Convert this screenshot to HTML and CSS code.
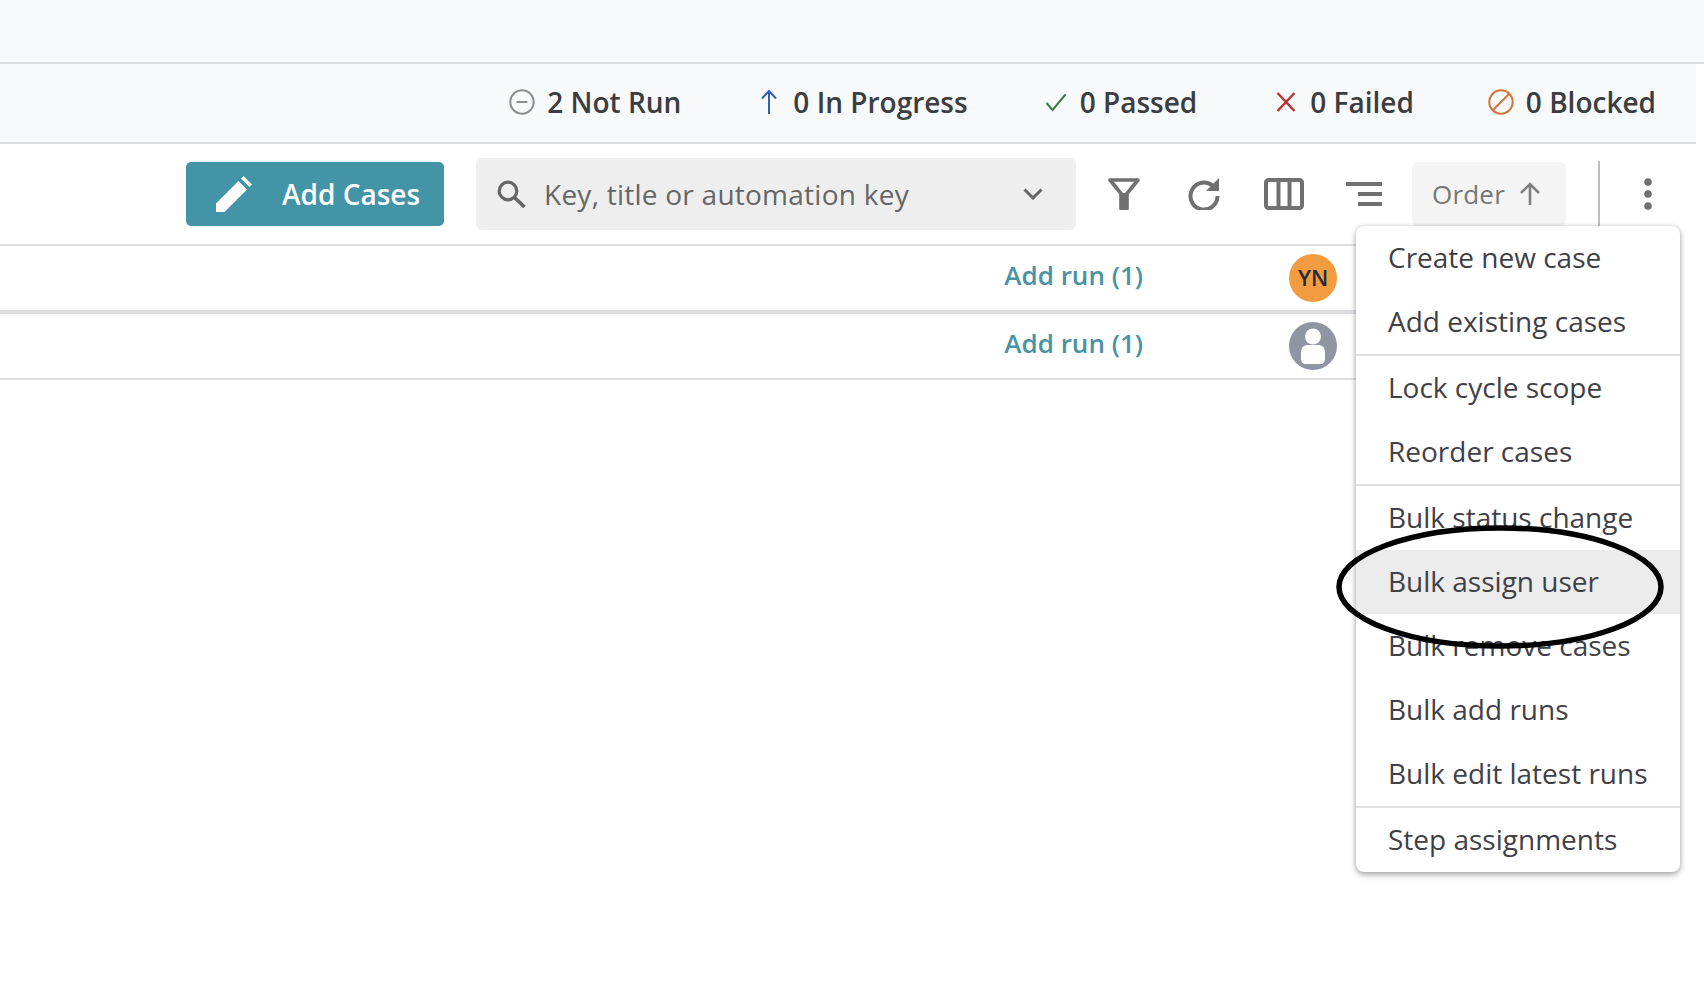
FILE: index.html
```html
<!DOCTYPE html>
<html lang="en">
<head>
    <meta charset="UTF-8">
    <title>Test cycle</title>
    <link rel="stylesheet" href="styles.css">
</head>
<body>
<div class="top-band"></div>

<div class="status-bar">
    <div class="status status-not-run">
        <svg width="26" height="26" viewBox="0 0 26 26"><circle cx="13" cy="13" r="11.700" fill="none" stroke="#8a8d93" stroke-width="2"/><path d="M7.500 13h11" stroke="#8a8d93" stroke-width="2"/></svg>
        2 Not Run
    </div>
    <div class="status status-progress">
        <svg width="21" height="26" viewBox="0 0 21 26"><path d="M9 25V2M2 9.500 9 2l7 7.500" fill="none" stroke="#2f5fb8" stroke-width="2"/></svg>
        0 In Progress
    </div>
    <div class="status status-passed">
        <svg width="23" height="26" viewBox="0 0 23 26"><path d="M1.500 14l6 7L20.500 5.500" fill="none" stroke="#3d7a45" stroke-width="2"/></svg>
        0 Passed
    </div>
    <div class="status status-failed">
        <svg width="22" height="26" viewBox="0 0 22 26"><path d="M1.500 4l17 18M18.500 4l-17 18" fill="none" stroke="#c0302a" stroke-width="2.400"/></svg>
        0 Failed
    </div>
    <div class="status status-blocked">
        <svg width="26" height="26" viewBox="0 0 26 26"><circle cx="13" cy="13" r="11.700" fill="none" stroke="#cf7436" stroke-width="2"/><path d="M5 21 21 5" stroke="#cf7436" stroke-width="2"/></svg>
        0 Blocked
    </div>
</div>

<div class="toolbar">
    <button class="add-button">
        <svg width="36" height="36" viewBox="0 0 36 36"><path d="M0 36v-8.500L22.500 5l8.500 8.500L8.500 36zM25 2.500 27.500 0 36 8.500 33.500 11z" fill="#fff"/></svg>
        Add Cases
    </button>
    <div class="search">
        <svg width="30" height="28" viewBox="0 0 30 28"><circle cx="11" cy="11" r="8.800" fill="none" stroke="#666" stroke-width="3.200"/><path d="M17.500 17.500 27.500 27" stroke="#666" stroke-width="3.600"/></svg>
        <span class="search-text">Key, title or automation key</span>
        <svg width="20" height="12" viewBox="0 0 20 12"><path d="M1.500 1.500 10 10l8.500-8.500" fill="none" stroke="#666" stroke-width="3"/></svg>
    </div>
    <svg class="tool-filter" width="32" height="32" viewBox="0 0 32 32"><path d="M2 2h28L19 15.500V30.500h-6V15.500z" fill="none" stroke="#707070" stroke-width="3.600" stroke-linejoin="round"/><path d="M13 15h6v15.500h-6z" fill="#707070"/></svg>
    <svg class="tool-refresh" width="32" height="32" viewBox="0 0 32 32"><path d="M25 8A13.500 13.500 0 1 0 29.500 18" fill="none" stroke="#707070" stroke-width="4"/><path d="M31 0v13H18z" fill="#707070"/></svg>
    <svg class="tool-columns" width="40" height="32" viewBox="0 0 40 32"><rect x="2" y="2" width="36" height="28" rx="2.500" fill="none" stroke="#707070" stroke-width="4"/><path d="M14.500 2v28M25.500 2v28" stroke="#707070" stroke-width="4"/></svg>
    <svg class="tool-lines" width="36" height="24" viewBox="0 0 36 24"><path d="M0 2h36M12 12h24M12 22h24" stroke="#707070" stroke-width="4"/></svg>
    <button class="order-button">
        Order
        <svg width="22" height="24" viewBox="0 0 22 24"><path d="M11 23V2M2 11l9-9 9 9" fill="none" stroke="#808080" stroke-width="2.600"/></svg>
    </button>
    <div class="divider"></div>
    <svg class="kebab" width="10" height="32" viewBox="0 0 10 32"><circle cx="5" cy="4" r="3.800" fill="#707070"/><circle cx="5" cy="16" r="3.800" fill="#707070"/><circle cx="5" cy="28" r="3.800" fill="#707070"/></svg>
</div>

<div class="case-list">
    <div class="case-row">
        <a href="#" class="run-link">Add run (1)</a>
        <div class="avatar avatar-initials">YN</div>
    </div>
    <div class="case-row case-row-second">
        <a href="#" class="run-link">Add run (1)</a>
        <svg class="avatar" width="48" height="48" viewBox="0 0 48 48"><circle cx="24" cy="24" r="24" fill="#8f95a3"/><circle cx="24" cy="14.500" r="8" fill="#fff"/><path d="M12 31c0-6 3-8 7-8h10c4 0 7 2 7 8v6c0 3-2 5-5 5H17c-3 0-5-2-5-5z" fill="#fff"/></svg>
    </div>
</div>

<div class="menu">
    <div class="menu-group">
        <div class="menu-item">Create new case</div>
        <div class="menu-item">Add existing cases</div>
    </div>
    <div class="menu-group">
        <div class="menu-item">Lock cycle scope</div>
        <div class="menu-item">Reorder cases</div>
    </div>
    <div class="menu-group">
        <div class="menu-item">Bulk status change</div>
        <div class="menu-item menu-item-active">Bulk assign user</div>
        <div class="menu-item">Bulk remove cases</div>
        <div class="menu-item">Bulk add runs</div>
        <div class="menu-item">Bulk edit latest runs</div>
    </div>
    <div class="menu-group">
        <div class="menu-item">Step assignments</div>
    </div>
</div>

<!-- circle drawn on top of the screenshot -->
<svg class="marker" width="336" height="130" viewBox="0 0 336 130"><ellipse cx="168" cy="65" rx="161" ry="59" fill="none" stroke="#000" stroke-width="5.500"/></svg>
</body>
</html>
```

FILE: styles.css
```css
body {
    font-family: "Open Sans", sans-serif;
    background-color: white;
    margin: 0;
    height: 984px;
    overflow: hidden;
    position: relative;
}

.top-band {
    height: 62px;
    background-color: #f8f9fb;
    border-bottom: 2px solid #dcdde0;
}

.status-bar {
    width: 1696px;
    height: 80px;
    box-sizing: border-box;
    padding: 0 40px 2px 0;
    background-color: #f8f9fb;
    border-bottom: 2px solid #dcdde0;
    display: flex;
    align-items: center;
    justify-content: flex-end;
    font-size: 28px;
    font-weight: 600;
    color: #3b3d42;
}

.status {
    display: flex;
    align-items: center;
    gap: 12px;
}

.status-progress {
    margin-left: 79px;
}

.status-passed {
    margin-left: 77px;
}

.status-failed {
    margin-left: 79px;
}

.status-blocked {
    margin-left: 74px;
}

.toolbar {
    width: 1696px;
    height: 100px;
    box-sizing: border-box;
    padding-left: 186px;
    display: flex;
    align-items: center;
}

.add-button {
    width: 258px;
    height: 64px;
    box-sizing: border-box;
    padding: 0 0 0 30px;
    display: flex;
    align-items: center;
    gap: 30px;
    border: none;
    border-radius: 5px;
    background-color: #4494a8;
    color: white;
    font-family: inherit;
    font-size: 28px;
    font-weight: 600;
}

.search {
    width: 600px;
    height: 72px;
    box-sizing: border-box;
    margin-left: 32px;
    padding: 0 33px 0 21px;
    display: flex;
    align-items: center;
    border-radius: 6px;
    background-color: #eeeeee;
    color: #666;
    font-size: 28px;
    letter-spacing: 0.25px;
}

.search-text {
    flex: 1;
    margin-left: 17px;
}

.tool-filter {
    margin-left: 32px;
}

.tool-refresh {
    margin-left: 48px;
}

.tool-columns {
    margin-left: 44px;
}

.tool-lines {
    margin-left: 42px;
}

.order-button {
    width: 154px;
    height: 64px;
    box-sizing: border-box;
    margin-left: 30px;
    padding: 0 0 0 20px;
    display: flex;
    align-items: center;
    gap: 14px;
    border: none;
    border-radius: 6px;
    background-color: #f4f4f4;
    color: #777;
    font-family: inherit;
    font-size: 26px;
    font-weight: 500;
    letter-spacing: 0.2px;
}

.divider {
    width: 2px;
    height: 66px;
    margin-left: 32px;
    background-color: #bdbdbd;
}

.kebab {
    margin-left: 43px;
}

.case-list {
    width: 1500px;
    border-top: 2px solid #dcdde0;
}

.case-row {
    height: 68px;
    box-sizing: border-box;
    padding-right: 163px;
    display: flex;
    align-items: center;
    justify-content: flex-end;
    border-bottom: 4px solid #dcdde0;
}

.case-row-second {
    height: 66px;
    border-bottom-width: 2px;
}

.run-link {
    margin-right: 146px;
    margin-bottom: 7px;
    font-size: 26px;
    font-weight: 600;
    color: #4a93a5;
    text-decoration: none;
}

.avatar {
    width: 48px;
    height: 48px;
    flex-shrink: 0;
}

.avatar-initials {
    display: flex;
    align-items: center;
    justify-content: center;
    box-sizing: border-box;
    padding-bottom: 2px;
    border-radius: 50%;
    background-color: #f39c3f;
    color: #252a36;
    font-size: 22px;
    font-weight: 600;
}

.menu {
    position: absolute;
    top: 226px;
    left: 1356px;
    width: 324px;
    border-radius: 8px;
    background-color: white;
    box-shadow: 0 3px 6px rgba(0, 0, 0, 0.3), 0 0 4px rgba(0, 0, 0, 0.15);
    color: #3f4146;
    font-size: 28px;
    overflow: hidden;
}

.menu-group + .menu-group {
    border-top: 2px solid #dfdfe1;
}

.menu-item {
    height: 64px;
    box-sizing: border-box;
    padding: 0 0 2px 32px;
    display: flex;
    align-items: center;
}

.menu-item-active {
    background-color: #ececec;
}

.marker {
    position: absolute;
    top: 522px;
    left: 1332px;
}
```
